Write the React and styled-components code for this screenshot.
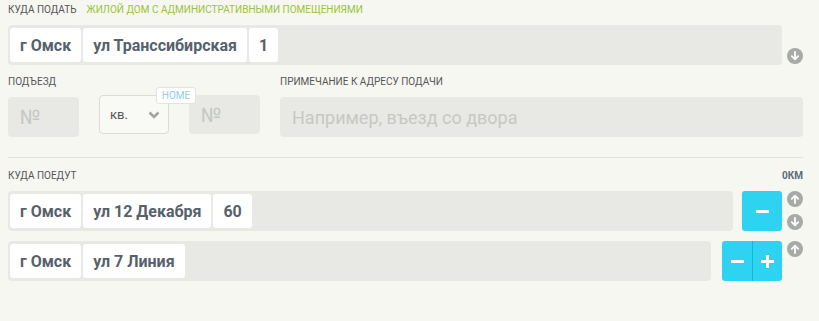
import React from "react";
import styled, { createGlobalStyle } from "styled-components";

const cyan = "#2ed3f1";
const fieldBg = "#e8e9e5";
const chipText = "#56616b";

const GlobalStyle = createGlobalStyle`
  html, body {
    margin: 0;
    padding: 0;
    background: #f7f7f2;
  }
  body {
    font-family: Roboto, "Noto Sans", "Liberation Sans", sans-serif;
  }
`;

const Page = styled.div`
  width: 819px;
  box-sizing: border-box;
  padding: 4px 16px 0 8px;
`;

const Heading = styled.div`
  display: flex;
  align-items: center;
  gap: 10px;
  height: 12px;
  margin-bottom: ${(p) => p.$gap || 9}px;
  font-size: 10px;
  line-height: 12px;
  text-transform: uppercase;
  color: #555;
`;

const Hint = styled.span`
  color: #9cc23c;
`;

const Distance = styled.span`
  margin-left: auto;
  font-weight: 700;
  color: #5a6b78;
`;

const Row = styled.div`
  display: flex;
  align-items: stretch;
  height: 40px;
  margin-bottom: ${(p) => p.$spacing || 0}px;
`;

const Field = styled.div`
  flex: 1;
  display: flex;
  gap: 2px;
  padding: 3px 2px;
  box-sizing: border-box;
  background: ${fieldBg};
  border-radius: 4px;
  margin-right: ${(p) => p.$spacing || 0}px;
`;

const Chip = styled.div`
  display: flex;
  align-items: center;
  padding: 0 10px;
  background: #fff;
  border-radius: 3px;
  font-size: 16px;
  font-weight: 700;
  color: ${chipText};
  white-space: nowrap;
`;

const Controls = styled.div`
  display: flex;
  border-radius: 3px;
  overflow: hidden;
`;

const ActionButton = styled.button`
  width: ${(p) => p.$width || 40}px;
  height: 40px;
  border: 0;
  padding: 0;
  margin: 0;
  background: ${cyan};
  display: flex;
  align-items: center;
  justify-content: center;
  cursor: pointer;
  & + & {
    border-left: 1px solid #17b5d3;
  }
`;

const Arrows = styled.div`
  width: 16px;
  margin-left: 5px;
  display: flex;
  flex-direction: column;
  justify-content: space-between;
`;

const ArrowDot = styled.span`
  display: flex;
  width: 16px;
  height: 16px;
  border-radius: 50%;
  background: #a8aaa7;
  align-items: center;
  justify-content: center;
  margin-top: ${(p) => (p.$bottom ? "auto" : "0")};
  margin-bottom: ${(p) => (p.$bottom ? "1px" : "0")};
`;

const Details = styled.div`
  display: grid;
  grid-template-columns: 71px 70px 71px 1fr;
  column-gap: 20px;
  row-gap: 7px;
  margin-top: 11px;
`;

const SmallLabel = styled.div`
  grid-column: ${(p) => p.$col};
  font-size: 10px;
  line-height: 12px;
  height: 12px;
  text-transform: uppercase;
  color: #555;
  white-space: nowrap;
`;

const TextBox = styled.div`
  height: ${(p) => p.$h || 40}px;
  margin-top: ${(p) => p.$offset || 0}px;
  background: ${fieldBg};
  border-radius: 4px;
  display: flex;
  align-items: center;
  padding-left: ${(p) => p.$pad || 12}px;
  font-size: ${(p) => p.$size || 20}px;
  color: #c6c8c4;
  white-space: nowrap;
  overflow: hidden;
`;

const Select = styled.div`
  position: relative;
  height: 39px;
  box-sizing: border-box;
  border: 1px solid #dcdcd6;
  border-radius: 4px;
  background: #f9f9f6;
  display: flex;
  align-items: center;
  justify-content: space-between;
  padding: 0 8px 0 10px;
  font-size: 13px;
  color: #555;
`;

const Badge = styled.span`
  position: absolute;
  left: 56px;
  top: -9px;
  width: 40px;
  height: 17px;
  box-sizing: border-box;
  border: 1px solid #e4e4df;
  border-radius: 3px;
  background: #fff;
  font-size: 10px;
  line-height: 15px;
  text-align: center;
  color: #8fcfe4;
`;

const Divider = styled.hr`
  border: 0;
  border-top: 1px solid #e3e3de;
  margin: 20px 0 12px;
`;

const Minus = () => (
  <svg width="13" height="3" viewBox="0 0 13 3">
    <rect width="13" height="3" fill="#fff" />
  </svg>
);

const Plus = () => (
  <svg width="13" height="13" viewBox="0 0 13 13">
    <rect y="5" width="13" height="3" fill="#fff" />
    <rect x="5" width="3" height="13" fill="#fff" />
  </svg>
);

const Arrow = ({ down }) => (
  <svg width="10" height="10" viewBox="0 0 10 10" style={{ transform: down ? "rotate(180deg)" : "none" }}>
    <path d="M5 9V2M1.8 4.8L5 1.6l3.2 3.2" stroke="#fff" strokeWidth="1.8" fill="none" strokeLinecap="round" strokeLinejoin="round" />
  </svg>
);

const Chevron = () => (
  <svg width="12" height="8" viewBox="0 0 12 8">
    <path d="M1.5 1.5L6 6l4.5-4.5" stroke="#a3a3a0" strokeWidth="2.6" fill="none" />
  </svg>
);

const destinations = [
  { parts: ["г Омск", "ул 12 Декабря", "60"], up: true, down: true, plus: false },
  { parts: ["г Омск", "ул 7 Линия"], up: true, down: false, plus: true },
];

export default function App() {
  return (
    <Page>
      <GlobalStyle />
      <Heading>
        <span>Куда подать</span>
        <Hint>Жилой дом с административными помещениями</Hint>
      </Heading>
      <Row>
        <Field>
          <Chip>г Омск</Chip>
          <Chip>ул Транссибирская</Chip>
          <Chip>1</Chip>
        </Field>
        <Arrows>
          <ArrowDot $bottom>
            <Arrow down />
          </ArrowDot>
        </Arrows>
      </Row>

      <Details>
        <SmallLabel $col="1 / 2">Подъезд</SmallLabel>
        <SmallLabel $col="4 / 5">Примечание к адресу подачи</SmallLabel>
        <TextBox $offset={2}>№</TextBox>
        <Select>
          кв.
          <Chevron />
          <Badge>HOME</Badge>
        </Select>
        <TextBox $h={39}>№</TextBox>
        <TextBox $offset={2} $size={18}>Например, въезд со двора</TextBox>
      </Details>

      <Divider />

      <Heading>
        <span>Куда поедут</span>
        <Distance>0км</Distance>
      </Heading>

      {destinations.map((d, i) => (
        <Row key={i} $spacing={i === 0 ? 10 : 0}>
          <Field $spacing={d.plus ? 11 : 9}>
            {d.parts.map((p) => (
              <Chip key={p}>{p}</Chip>
            ))}
          </Field>
          <Controls>
            <ActionButton $width={d.plus ? 30 : 40}>
              <Minus />
            </ActionButton>
            {d.plus && (
              <ActionButton $width={30}>
                <Plus />
              </ActionButton>
            )}
          </Controls>
          <Arrows>
            {d.up && (
              <ArrowDot>
                <Arrow />
              </ArrowDot>
            )}
            {d.down && (
              <ArrowDot $bottom>
                <Arrow down />
              </ArrowDot>
            )}
          </Arrows>
        </Row>
      ))}
    </Page>
  );
}
